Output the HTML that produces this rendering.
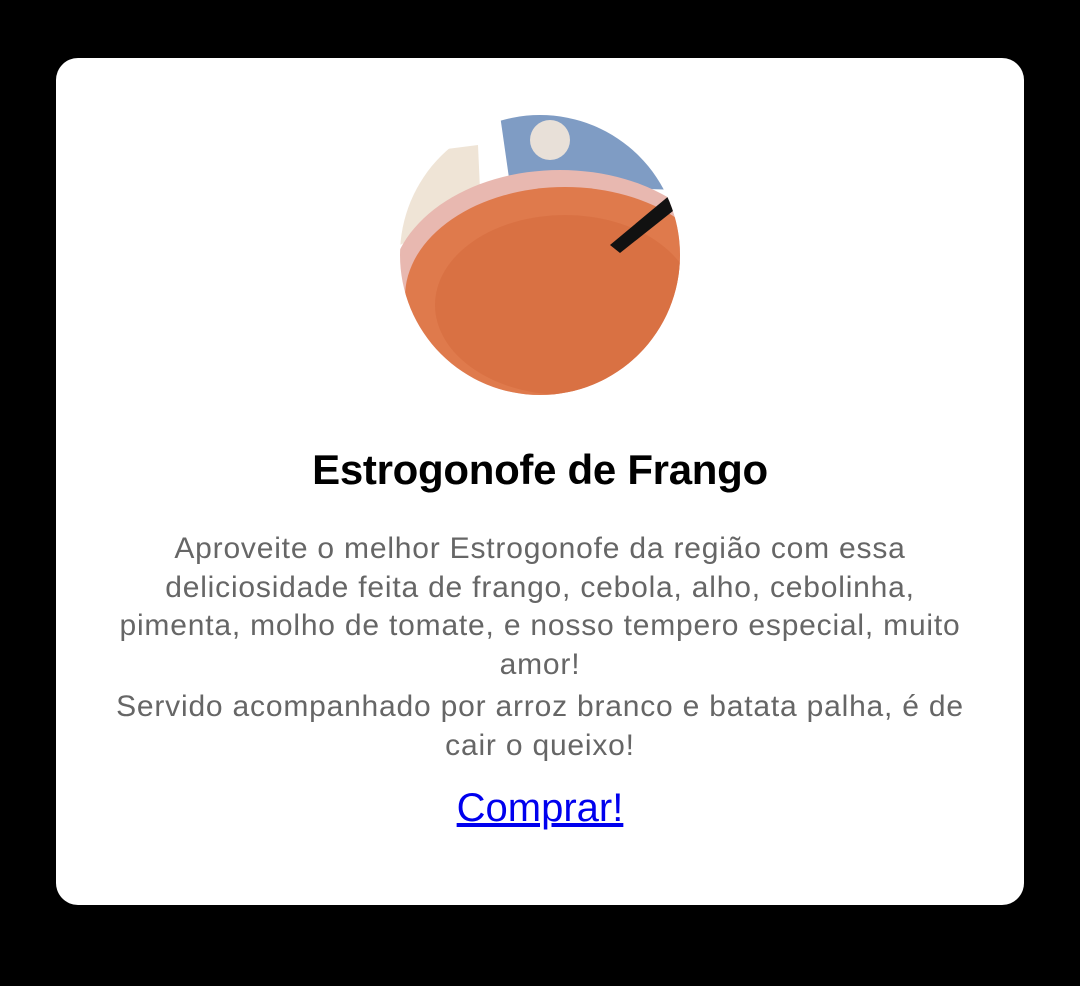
<!DOCTYPE html>
<html><head><meta charset="utf-8"><style>
html,body{margin:0;padding:0;background:#000;width:1080px;height:986px;overflow:hidden;font-family:"Liberation Sans",Roboto,sans-serif}
.card{position:absolute;left:56px;top:58px;width:968px;height:847px;background:#fff;border-radius:22px}
svg{position:absolute;left:400px;top:115px}
h1{position:absolute;left:0;right:0;top:446px;margin:0;text-align:center;font-size:42px;font-weight:bold;color:#000;letter-spacing:-0.3px}
.d{position:absolute;left:0;width:1080px;top:530px;text-align:center;font-size:30px;letter-spacing:0.8px;line-height:38.5px;color:#666;white-space:nowrap}
.d p{margin:0}
a{position:absolute;left:0;right:0;top:786px;text-align:center;font-size:40px;color:#0000ee;text-decoration:underline}
</style></head><body>
<div class="card"></div>
<svg width="280" height="280" viewBox="0 0 280 280">
<defs><clipPath id="c"><circle cx="140" cy="140" r="140"/></clipPath></defs>
<g clip-path="url(#c)">
<rect width="280" height="280" fill="#fff"/>
<path d="M100 0 L280 0 L280 75 L110 70 Z" fill="#7f9cc4"/>
<circle cx="150" cy="25" r="20" fill="#e8e0d8"/>
<path d="M0 40 L78 30 L80 75 L20 120 L0 130 Z" fill="#efe4d6"/>
<ellipse cx="160" cy="175" rx="170" ry="120" fill="#e8b8b0"/>
<ellipse cx="165" cy="182" rx="160" ry="110" fill="#df7a4c"/>
<ellipse cx="165" cy="190" rx="130" ry="90" fill="#d56a3d" opacity=".6"/>
<path d="M210 130 L270 80 L278 92 L220 138 Z" fill="#111"/>
</g></svg>
<h1>Estrogonofe de Frango</h1>
<div class="d"><p>Aproveite o melhor Estrogonofe da região com essa<br>deliciosidade feita de frango, cebola, alho, cebolinha,<br>pimenta, molho de tomate, e nosso tempero especial, muito<br>amor!</p><p style="margin-top:4px">Servido acompanhado por arroz branco e batata palha, é de<br>cair o queixo!</p></div>
<a href="#">Comprar!</a>
</body></html>
